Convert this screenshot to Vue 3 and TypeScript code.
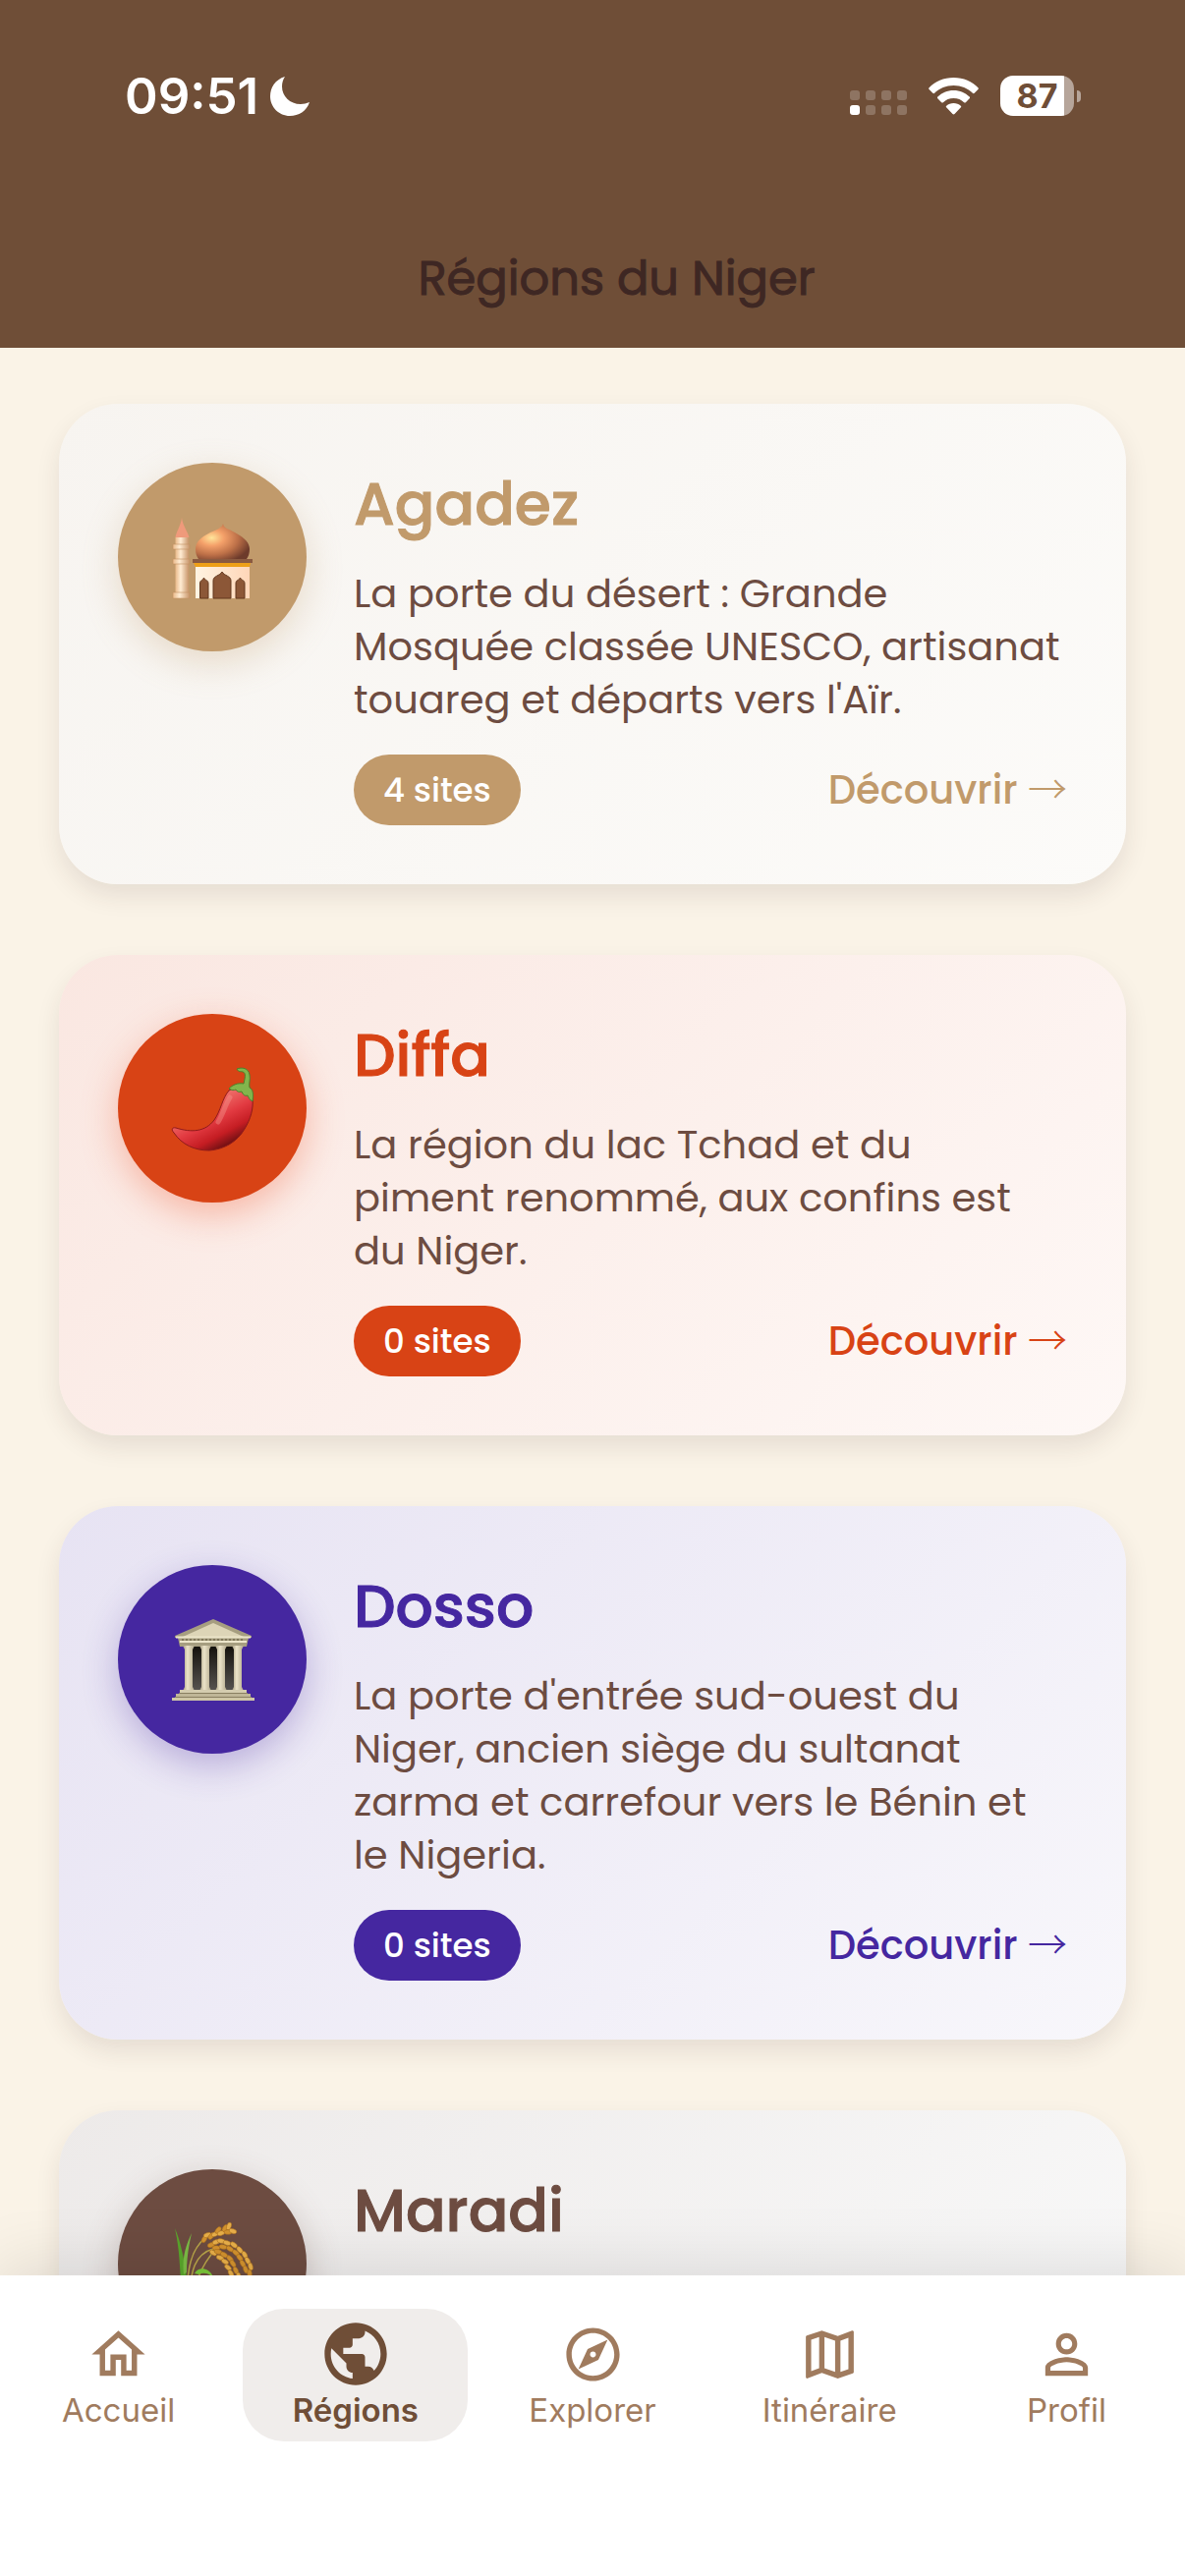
<script setup lang="ts">
interface Region {
  id: string
  name: string
  lines?: string
  sites?: number
}

interface Tab {
  id: string
  label: string
  icon: string
}

const regions: Region[] = [
  {
    id: 'agadez',
    name: 'Agadez',
    lines: "La porte du désert : Grande\nMosquée classée UNESCO, artisanat\ntouareg et départs vers l'Aïr.",
    sites: 4,
  },
  {
    id: 'diffa',
    name: 'Diffa',
    lines: 'La région du lac Tchad et du\npiment renommé, aux confins est\ndu Niger.',
    sites: 0,
  },
  {
    id: 'dosso',
    name: 'Dosso',
    lines: "La porte d'entrée sud-ouest du\nNiger, ancien siège du sultanat\nzarma et carrefour vers le Bénin et\nle Nigeria.",
    sites: 0,
  },
  {
    id: 'maradi',
    name: 'Maradi',
  },
]

const tabs: Tab[] = [
  { id: 'accueil', label: 'Accueil', icon: 'M12 5.69l5 4.5V18h-2v-6H9v6H7v-7.81l5-4.5M12 3L2 12h3v8h6v-6h2v6h6v-8h3L12 3z' },
  { id: 'regions', label: 'Régions', icon: 'M12 2C6.48 2 2 6.48 2 12s4.48 10 10 10 10-4.48 10-10S17.52 2 12 2zm-1 17.93c-3.95-.49-7-3.85-7-7.93 0-.62.08-1.21.21-1.79L9 15v1c0 1.1.9 2 2 2v1.93zm6.9-2.54c-.26-.81-1-1.39-1.9-1.39h-1v-3c0-.55-.45-1-1-1H8v-2h2c.55 0 1-.45 1-1V7h2c1.1 0 2-.9 2-2v-.41c2.93 1.19 5 4.06 5 7.41 0 2.08-.8 3.97-2.1 5.39z' },
  { id: 'explorer', label: 'Explorer', icon: 'M12 2C6.48 2 2 6.48 2 12s4.48 10 10 10 10-4.48 10-10S17.52 2 12 2zm0 18c-4.41 0-8-3.59-8-8s3.59-8 8-8 8 3.59 8 8-3.59 8-8 8zm-5.5-2.5l7.51-3.49L17.5 6.5 9.99 9.99 6.5 17.5zm5.5-6.6c.61 0 1.1.49 1.1 1.1s-.49 1.1-1.1 1.1-1.1-.49-1.1-1.1.49-1.1 1.1-1.1z' },
  { id: 'itineraire', label: 'Itinéraire', icon: 'M20.5 3l-.16.03L15 5.1 9 3 3.36 4.9c-.21.07-.36.25-.36.48V20.5c0 .28.22.5.5.5l.16-.03L9 18.9l6 2.1 5.64-1.9c.21-.07.36-.25.36-.48V3.5c0-.28-.22-.5-.5-.5zM10 5.47l4 1.4v11.66l-4-1.4V5.47zm-5 .99l3-1.01v11.7l-3 1.16V6.46zm14 11.08l-3 1.01V6.86l3-1.16v11.84z' },
  { id: 'profil', label: 'Profil', icon: 'M12 5.9c1.16 0 2.1.94 2.1 2.1s-.94 2.1-2.1 2.1S9.9 9.16 9.9 8s.94-2.1 2.1-2.1m0 9c2.97 0 6.1 1.46 6.1 2.1v1.1H5.9V17c0-.64 3.13-2.1 6.1-2.1M12 4C9.79 4 8 5.79 8 8s1.79 4 4 4 4-1.79 4-4-1.79-4-4-4zm0 9c-2.67 0-8 1.34-8 4v3h16v-3c0-2.66-5.33-4-8-4z' },
]

const current = 'regions'

/* x, y and angle of every grain on the three ears of rice */
const grains: [number, number, number][] = [
  [34, 17, -60], [37, 13, -20], [41, 14, -50], [45, 12, -25], [48, 8, -50], [51, 11, -20], [55, 6, -60], [59, 4, -70], [58, 10, 0], [63, 9, 20],
  [41, 23, -20], [46, 20, -20], [46, 26, 0], [51, 19, 10], [53, 25, 10], [57, 21, 20], [60, 27, 30], [64, 23, 35], [66, 31, 40], [70, 28, 50],
  [70, 36, 50], [75, 33, 60], [73, 42, 60], [78, 39, 60], [76, 48, 70], [81, 45, 75], [80, 52, 85],
  [43, 31, 30], [48, 30, 15], [50, 36, 20], [54, 33, 30], [55, 40, 30], [60, 37, 45], [58, 46, 40], [63, 42, 55], [61, 52, 60], [66, 49, 65], [69, 55, 75],
]
</script>

<template>
  <div class="app">
    <header class="top">
      <div class="status">
        <div class="clock">
          <span>09:51</span>
          <svg class="moon" viewBox="0 0 40 40" aria-hidden="true">
            <path d="M15 0C5 3 0 11 0 20c0 11 9 20 20 20 9 0 17-5 20-14-3 1-6 2-9 2C20 28 12 20 12 10c0-4 1-7 3-10z" />
          </svg>
        </div>
        <div class="indicators">
          <div class="signal" aria-hidden="true">
            <i v-for="n in 8" :key="n" :class="{ on: n === 5 }"></i>
          </div>
          <svg class="wifi" viewBox="0 0 51 38" aria-hidden="true">
            <path d="M25.500 0C15.500 0 6.500 4 .6 10.300c-.6.600-.6 1.200 0 1.800l3.700 3.700c.6.600 1.200.6 1.800 0C11 10.900 17.900 8 25.500 8s14.500 2.900 19.400 7.800c.6.600 1.200.6 1.800 0l3.700-3.700c.6-.6.6-1.200 0-1.800C44.500 4 35.500 0 25.500 0z" />
            <path d="M25.500 13c-6.400 0-12 2.500-16.200 6.600-.5.500-.5 1.200 0 1.700l3.900 3.900c.5.500 1.200.5 1.700 0 2.700-2.600 6.400-4.200 10.600-4.200s7.900 1.600 10.600 4.200c.5.500 1.200.5 1.700 0l3.900-3.900c.5-.5.5-1.200 0-1.700-4.200-4.100-9.800-6.600-16.200-6.600z" />
            <path d="M25.500 26c-2.800 0-5.400 1-7.300 2.700-.6.500-.6 1.100-.1 1.600l6.400 6.800c.6.600 1.400.6 2 0l6.400-6.800c.5-.5.500-1.100-.1-1.600-1.900-1.700-4.500-2.700-7.300-2.700z" />
          </svg>
          <div class="battery">
            <span class="level">87</span>
            <i class="nub"></i>
          </div>
        </div>
      </div>
      <h1>Régions du Niger</h1>
    </header>

    <main class="list">
      <article v-for="region in regions" :key="region.id" class="card" :class="region.id">
        <div class="disc" aria-hidden="true">
          <svg v-if="region.id === 'agadez'" viewBox="0 0 84 84">
            <defs>
              <radialGradient id="dome" cx="0.3" cy="0.4" r="0.75">
                <stop offset="0" stop-color="#ffe49a" />
                <stop offset="0.3" stop-color="#f4a069" />
                <stop offset="0.65" stop-color="#bd7048" />
                <stop offset="1" stop-color="#6d3b2b" />
              </radialGradient>
              <linearGradient id="tower">
                <stop offset="0" stop-color="#e9b98a" />
                <stop offset="0.4" stop-color="#ffecd3" />
                <stop offset="1" stop-color="#c9966b" />
              </linearGradient>
              <linearGradient id="wall">
                <stop offset="0" stop-color="#fff4e2" />
                <stop offset="1" stop-color="#ffd6b8" />
              </linearGradient>
            </defs>
            <path d="M11 2C10 10 5 17 4.500 22h14C17 16 12 10 11 2z" fill="#ef9a7b" />
            <path d="M4.500 22h13.500v60H4.500z" fill="url(#tower)" />
            <path d="M2 29h17v5H2zM2 44h17v5H2zM2 78h17v6H2z" fill="url(#tower)" stroke="#c39063" stroke-width="0.6" />
            <path d="M53 8c1 5 5 5 12 9 11 6 15 11 15 17 0 4-1 7-3 10H28c-2-3-3-6-3-10 0-7 5-12 15-17 7-3 12-5 13-9z" fill="url(#dome)" />
            <path d="M25 52h55v32H25z" fill="url(#wall)" />
            <path d="M22 44h61v4H22z" fill="#8a5a40" />
            <path d="M23 48h58l-1 4H25z" fill="#eea018" />
            <path d="M43 84V66c0-5 7-5 9-9 2 4 9 4 9 9v18zM29.500 84V69c0-4 3-3 4-6 1 3 4.500 2 4.500 6v15zM66 84V69c0-4 3-3 4.500-6 1 3 4.500 2 4.500 6v15z" fill="#8c5737" stroke="#63391f" stroke-width="1" />
          </svg>
          <svg v-else-if="region.id === 'diffa'" viewBox="0 0 84 84">
            <defs>
              <linearGradient id="skin" x1="0.35" y1="0.2" x2="0.8" y2="0.85">
                <stop offset="0" stop-color="#f27b73" />
                <stop offset="0.45" stop-color="#e23a41" />
                <stop offset="0.75" stop-color="#c51d23" />
                <stop offset="1" stop-color="#6d0f12" />
              </linearGradient>
            </defs>
            <path d="M59 24c-7 8-8 20-15 30-9 12-23 13-39 8-4-1-5 2-2 5 8 12 21 18 36 18 14-1 28-8 36-22 6-10 9-20 8-31-7-9-17-13-24-8z" fill="url(#skin)" stroke="#8f1a1a" stroke-width="1" />
            <path d="M60 31c-5 8-7 17-12 25" fill="none" stroke="#f49a92" stroke-opacity="0.4" stroke-width="5" stroke-linecap="round" />
            <path d="M67 2c5-2 12-1 13 6 1 5-1 9 0 13 4 2 4 8 3 14-3-1-4-4-5-6-3 1-5-1-6-4-3 1-5 0-6-2-2 1-4 1-7-1 4-4 9-6 15-5 1-5 3-11-1-12-2-1-4 1-6-3z" fill="#82b54c" stroke="#4d812b" stroke-width="1" />
          </svg>
          <svg v-else-if="region.id === 'dosso'" viewBox="0 0 84 84">
            <defs>
              <linearGradient id="column">
                <stop offset="0" stop-color="#a59c7f" />
                <stop offset="0.4" stop-color="#ece4c9" />
                <stop offset="1" stop-color="#b1a88b" />
              </linearGradient>
              <linearGradient id="inside" x2="0" y2="1">
                <stop offset="0" stop-color="#15120d" />
                <stop offset="1" stop-color="#55524f" />
              </linearGradient>
            </defs>
            <path d="M15 29h55v44H15z" fill="url(#inside)" />
            <path d="M43 1l39 17v2h-3l-2 9H9l-2-9H4v-2z" fill="#a69e80" />
            <path d="M43 5l31 14H12z" fill="#ddd5b7" />
            <path d="M5 19.500h76M9 24h68" stroke="#ece5ca" stroke-width="2" />
            <path d="M11 22h64" stroke="#7f7659" stroke-width="2" stroke-dasharray="2 2" />
            <g fill="url(#column)">
              <path d="M12 28h12l-2 4v38l2 4H12l2-4V32z" />
              <path d="M29 28h12l-2 4v38l2 4H29l2-4V32z" />
              <path d="M45 28h12l-2 4v38l2 4H45l2-4V32z" />
              <path d="M62 28h12l-2 4v38l2 4H62l2-4V32z" />
            </g>
            <path d="M9 73h68v4H9z" fill="#d4ccaf" />
            <path d="M5 77h76v3H5z" fill="#bfb697" />
            <path d="M1 81h84v3H1z" fill="#cfc6a6" />
            <path d="M8 76.500h70M4 80.500h78" stroke="#897f61" stroke-width="1" />
          </svg>
          <svg v-else viewBox="0 0 84 84">
            <path d="M4 6c6 14 8 28 11 40l3 36h-6C9 60 10 32 4 6z" fill="#5aa62c" />
            <path d="M21 11c-3 13-5 25-5 40l-3 2C11 36 15 24 21 11z" fill="#7cbd45" />
            <path d="M16 82c0-34 4-55 20-67M19 82c0-34 6-50 24-55M23 82c0-12 4-34 22-54" fill="none" stroke="#b9a649" stroke-width="1.500" />
            <path d="M24 52c5-8 16-5 19 4-6-5-10-5-15-3z" fill="#7cc93a" />
            <ellipse v-for="(g, i) in grains" :key="i" :cx="g[0]" :cy="g[1]" rx="4" ry="2.300" :transform="`rotate(${g[2]} ${g[0]} ${g[1]})`" :fill="i % 2 ? '#e9b04a' : '#d4932f'" stroke="#a96d1c" stroke-width="0.500" />
          </svg>
        </div>
        <div class="body">
          <h2>{{ region.name }}</h2>
          <p v-if="region.lines">{{ region.lines }}</p>
          <div v-if="region.sites !== undefined" class="foot">
            <span class="badge">{{ region.sites }} sites</span>
            <a class="more" :href="`#${region.id}`">Découvrir <span class="arrow">→</span></a>
          </div>
        </div>
      </article>
    </main>

    <nav class="tabs">
      <a v-for="tab in tabs" :key="tab.id" :href="`#${tab.id}`" class="tab" :class="{ active: tab.id === current }">
        <span class="glyph">
          <svg viewBox="0 0 24 24" aria-hidden="true"><path :d="tab.icon" /></svg>
        </span>
        <span>{{ tab.label }}</span>
      </a>
    </nav>
  </div>
</template>

<style>
body {
  background: #faf3e7;
}
</style>

<style scoped>
* {
  box-sizing: border-box;
}

.app {
  display: flex;
  flex-direction: column;
  height: 100vh;
  overflow: hidden;
  background: #faf3e7;
  color: #6d4c41;
  font-family: Poppins, Inter, 'Noto Sans', sans-serif;
}

.top {
  flex: none;
  background: #6f4e37;
  padding: 66px 106px 34px 127px;
}

.status {
  display: flex;
  align-items: center;
  justify-content: space-between;
  height: 63px;
  color: #fff;
  font-family: Inter, sans-serif;
}

.clock {
  display: flex;
  align-items: center;
  gap: 12px;
  font-size: 51px;
  font-weight: 600;
}

.moon {
  width: 40px;
  height: 40px;
  fill: #fff;
}

.indicators {
  display: flex;
  align-items: center;
  gap: 22px;
}

.signal {
  display: grid;
  grid-template-columns: repeat(4, 10px);
  gap: 5px 6px;
  padding-top: 14px;
}

.signal i {
  height: 10px;
  border-radius: 3px;
  background: rgba(255, 255, 255, 0.22);
}

.signal i.on {
  background: #fff;
}

.wifi {
  width: 51px;
  height: 38px;
  fill: #fff;
}

.battery {
  display: flex;
  align-items: center;
  gap: 3px;
}

.level {
  width: 75px;
  height: 41px;
  border-radius: 13px;
  background: linear-gradient(90deg, #fff 65px, #b6a59a 65px);
  color: #6f4e37;
  font-size: 34px;
  font-weight: 700;
  line-height: 41px;
  text-align: center;
}

.nub {
  width: 4px;
  height: 12px;
  border-radius: 0 4px 4px 0;
  background: #b6a59a;
}

h1 {
  margin: 119px 0 0 28px;
  font-size: 48px;
  font-weight: 400;
  line-height: 72px;
  text-align: center;
  color: #3e2723;
  -webkit-text-stroke: 1px currentColor;
}

.list {
  flex: 1;
  min-height: 0;
  overflow: hidden;
  display: flex;
  flex-direction: column;
  gap: 72px;
  padding: 57px 60px 0;
}

.card {
  flex: none;
  display: flex;
  align-items: flex-start;
  gap: 48px;
  padding: 60px;
  border-radius: 60px;
  background: linear-gradient(135deg, var(--from), var(--to));
  box-shadow: 0 12px 24px rgba(62, 39, 35, 0.1);
}

.agadez {
  --tone: #c19a6b;
  --glow: rgba(193, 154, 107, 0.3);
  --from: #f7f4f0;
  --to: #fcfbf9;
}

.diffa {
  --tone: #d84315;
  --glow: rgba(240, 90, 50, 0.36);
  --from: #fae7e1;
  --to: #fef8f6;
}

.dosso {
  --tone: #4527a0;
  --glow: rgba(69, 39, 160, 0.3);
  --from: #e7e3f3;
  --to: #f8f7fb;
}

.maradi {
  --tone: #6d4c41;
  --glow: rgba(109, 76, 65, 0.3);
  --from: #edeae9;
  --to: #f9f9f9;
}

.disc {
  flex: none;
  display: grid;
  place-items: center;
  width: 192px;
  height: 192px;
  border-radius: 50%;
  background: var(--tone);
  box-shadow: 0 12px 36px var(--glow);
}

.disc svg {
  width: 84px;
  height: 84px;
  overflow: visible;
}

.body {
  flex: 1;
  min-width: 0;
}

h2 {
  margin: 0 0 22px;
  font-size: 60px;
  font-weight: 500;
  line-height: 84px;
  color: var(--tone);
  -webkit-text-stroke: 1px currentColor;
}

p {
  margin: 0 0 29px;
  font-size: 40px;
  font-weight: 400;
  line-height: 54px;
  white-space: pre;
}

.foot {
  display: flex;
  align-items: center;
  justify-content: space-between;
}

.badge {
  padding: 0 30px;
  border-radius: 36px;
  background: var(--tone);
  color: #fff;
  font-size: 34px;
  font-weight: 500;
  line-height: 72px;
}

.more {
  height: 72px;
  color: var(--tone);
  font-size: 40px;
  font-weight: 500;
  line-height: 67px;
  text-decoration: none;
}

.arrow {
  font-family: 'Noto Sans CJK JP', sans-serif;
  font-weight: 300;
}

.tabs {
  position: relative;
  flex: none;
  display: flex;
  padding: 34px 0 137px;
  background: #fff;
  box-shadow: 0 -12px 60px rgba(0, 0, 0, 0.1);
}

.tab {
  flex: 1;
  display: flex;
  flex-direction: column;
  align-items: center;
  margin: 0 6px;
  padding: 8px 0 12px;
  border-radius: 42px;
  color: #a07b5e;
  font-family: Inter, sans-serif;
  font-size: 33px;
  line-height: 39px;
  text-decoration: none;
}

.tab.active {
  background: #f0edeb;
  color: #6f4e37;
  font-weight: 600;
}

.glyph {
  display: grid;
  place-items: center;
  height: 76px;
}

.glyph svg {
  width: 65px;
  height: 65px;
  fill: currentColor;
}

.active .glyph svg {
  width: 76px;
  height: 76px;
}
</style>
